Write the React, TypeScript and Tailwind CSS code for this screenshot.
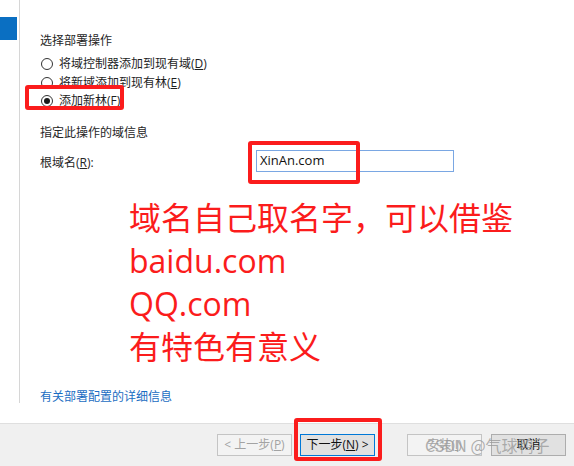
import React from "react";

const font = "font-['Segoe_UI','Open_Sans','Noto_Sans_CJK_SC',sans-serif]";

function Radio({ label, hotkey, checked }: { label: string; hotkey: string; checked?: boolean }) {
  return (
    <div className="flex items-center h-[18.5px]">
      <span className="ml-[1px] w-[12px] h-[12px] rounded-full border border-[#333] bg-white flex items-center justify-center">
        {checked && <span className="w-[6px] h-[6px] rounded-full bg-[#1a1a1a]" />}
      </span>
      <span className="ml-[6px] text-[12px] text-[#1e1e1e] leading-none">
        {label}(<span className="underline">{hotkey}</span>)
      </span>
    </div>
  );
}

function Btn({ children, variant }: { children: React.ReactNode; variant: "disabled" | "primary" | "normal" }) {
  const styles = {
    disabled: "border-[#c4c4c4] bg-[#f3f3f3] text-[#a3a3a3]",
    primary: "border-[#0078d7] bg-[#e1e1e1] text-[#111]",
    normal: "border-[#adadad] bg-[#e1e1e1] text-[#111]",
  }[variant];
  return (
    <button className={`w-[75px] h-[22px] border text-[12px] flex items-center justify-center ${styles}`}>
      {children}
    </button>
  );
}

export default function App() {
  return (
    <div className={`relative w-[574px] h-[466px] bg-white overflow-hidden ${font}`}>
      {/* ======= MAIN ======= */}
      <div className="flex h-[423px]">
        {/* Sidebar */}
        <div className="w-[20px] h-[403px] border-r border-[#d6d6d6]">
          <div className="mt-[17px] w-[17px] h-[23px] bg-[#0a6fc2]" />
        </div>

        {/* Content */}
        <div className="flex-1 flex flex-col pl-[20px] pt-[32px]">
          <div className="h-[17px] flex items-center text-[12px] text-[#262626]">选择部署操作</div>

          <div className="mt-[6px] flex flex-col">
            <Radio label="将域控制器添加到现有域" hotkey="D" />
            <Radio label="将新域添加到现有林" hotkey="E" />
            <Radio label="添加新林" hotkey="F" checked />
          </div>

          <div className="mt-[14px] h-[17px] flex items-center text-[12px] text-[#262626]">指定此操作的域信息</div>

          <div className="mt-[8.5px] flex items-center h-[22px]">
            <span className="w-[215px] text-[12px] text-[#262626] pt-[3px]">
              根域名(<span className="underline">R</span>):
            </span>
            <div className="ml-[1px] w-[198px] h-[22px] border border-[#7aa7e3] bg-white flex items-center pl-[3px] text-[13px] text-[#111]">
              XinAn.com
            </div>
          </div>

          <div className="mt-[23.5px] ml-[89px] text-[32px] leading-[43px] text-[#fb1c1c] font-['Open_Sans','Noto_Sans_CJK_SC',sans-serif]">
            <div>域名自己取名字，可以借鉴</div>
            <div>baidu.com</div>
            <div>QQ.com</div>
            <div>有特色有意义</div>
          </div>

          <div className="mt-[20px] text-[12px] text-[#1a6dc2]">有关部署配置的详细信息</div>
        </div>
      </div>

      {/* ======= FOOTER ======= */}
      <div className="h-[43px] bg-[#f0f0f0] border-t border-[#dfdfdf] flex items-start justify-end pt-[10px] pr-[8px]">
        <Btn variant="disabled">
          &lt; 上一步(<span className="underline">P</span>)
        </Btn>
        <div className="ml-[8px]">
          <Btn variant="primary">
            下一步(<span className="underline">N</span>) &gt;
          </Btn>
        </div>
        <div className="ml-[32px]">
          <Btn variant="disabled">
            安装(<span className="underline">I</span>)
          </Btn>
        </div>
        <div className="ml-[9px]">
          <Btn variant="normal">取消</Btn>
        </div>
      </div>

      {/* Annotation boxes */}
      <div className="absolute left-[25px] top-[85px] w-[99px] h-[25px] border-[4px] border-[#fb1c1c] rounded-[3px]" />
      <div className="absolute left-[248px] top-[141px] w-[112px] h-[43px] border-[4px] border-[#fb1c1c] rounded-[3px]" />
      <div className="absolute left-[294px] top-[418px] w-[88px] h-[43px] border-[4px] border-[#fb1c1c] rounded-[3px]" />

      {/* Watermark */}
      <div className="absolute left-[425px] top-[435px] text-[16px] leading-[20px] text-[#9a9a9a]/80 font-['Noto_Sans_CJK_SC',sans-serif] whitespace-nowrap">
        CSDN @气球鸭子
      </div>
    </div>
  );
}
